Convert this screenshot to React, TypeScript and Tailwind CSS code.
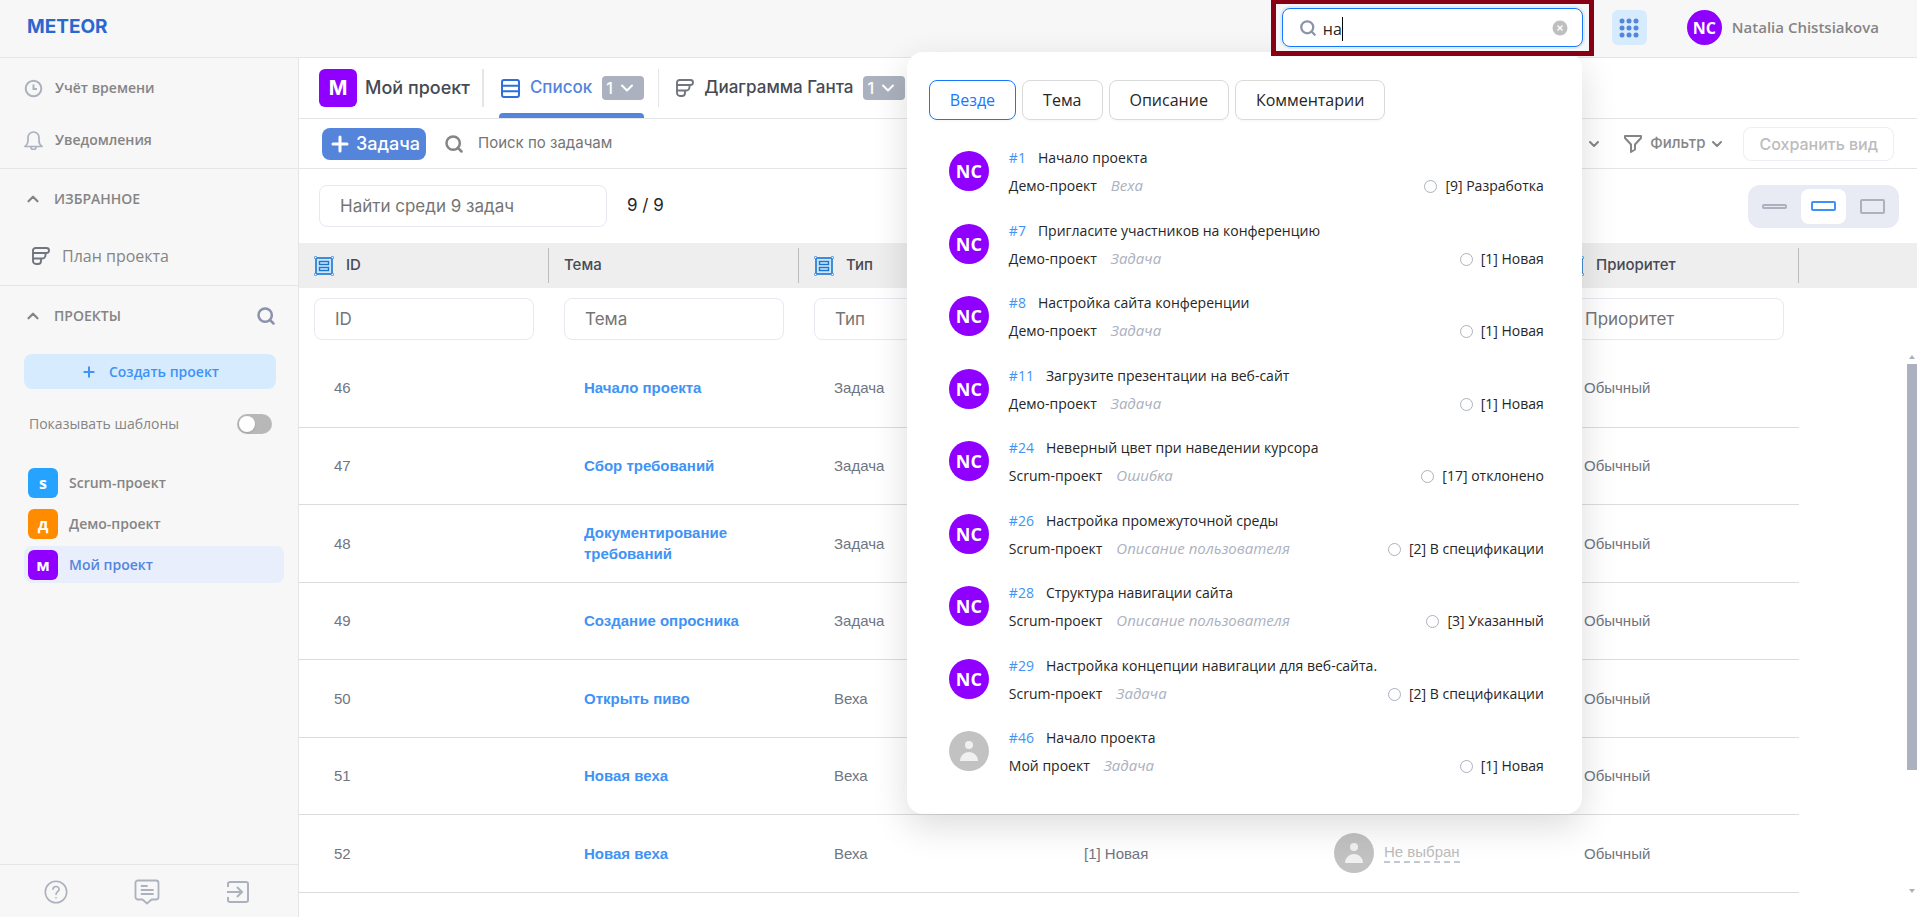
import { useState } from 'react';
import type { ReactNode } from 'react';
import { ChevronDown, ChevronUp, Plus, Search } from 'lucide-react';

interface SearchResult {
  id: number;
  subject: string;
  project: string;
  type: string;
  status: string;
  assigned: boolean;
}

interface WorkPackage {
  id: number;
  subject: string;
  type: string;
  status?: string;
  assignee?: string;
}

const results: SearchResult[] = [
  { id: 1, subject: 'Начало проекта', project: 'Демо-проект', type: 'Веха', status: '[9] Разработка', assigned: true },
  { id: 7, subject: 'Пригласите участников на конференцию', project: 'Демо-проект', type: 'Задача', status: '[1] Новая', assigned: true },
  { id: 8, subject: 'Настройка сайта конференции', project: 'Демо-проект', type: 'Задача', status: '[1] Новая', assigned: true },
  { id: 11, subject: 'Загрузите презентации на веб-сайт', project: 'Демо-проект', type: 'Задача', status: '[1] Новая', assigned: true },
  { id: 24, subject: 'Неверный цвет при наведении курсора', project: 'Scrum-проект', type: 'Ошибка', status: '[17] отклонено', assigned: true },
  { id: 26, subject: 'Настройка промежуточной среды', project: 'Scrum-проект', type: 'Описание пользователя', status: '[2] В спецификации', assigned: true },
  { id: 28, subject: 'Структура навигации сайта', project: 'Scrum-проект', type: 'Описание пользователя', status: '[3] Указанный', assigned: true },
  { id: 29, subject: 'Настройка концепции навигации для веб-сайта.', project: 'Scrum-проект', type: 'Задача', status: '[2] В спецификации', assigned: true },
  { id: 46, subject: 'Начало проекта', project: 'Мой проект', type: 'Задача', status: '[1] Новая', assigned: false },
];

const workPackages: WorkPackage[] = [
  { id: 46, subject: 'Начало проекта', type: 'Задача' },
  { id: 47, subject: 'Сбор требований', type: 'Задача' },
  { id: 48, subject: 'Документирование требований', type: 'Задача' },
  { id: 49, subject: 'Создание опросника', type: 'Задача' },
  { id: 50, subject: 'Открыть пиво', type: 'Веха' },
  { id: 51, subject: 'Новая веха', type: 'Веха' },
  { id: 52, subject: 'Новая веха', type: 'Веха', status: '[1] Новая', assignee: 'Не выбран' },
];

const columns = [
  { key: 'id', title: 'ID', grouped: true },
  { key: 'subject', title: 'Тема', grouped: false },
  { key: 'type', title: 'Тип', grouped: true },
  { key: 'status', title: '', grouped: true },
  { key: 'assignee', title: '', grouped: true },
  { key: 'priority', title: 'Приоритет', grouped: true },
];

const projects = [
  { letter: 's', name: 'Scrum-проект', color: 'bg-[#26a3ff]', active: false },
  { letter: 'д', name: 'Демо-проект', color: 'bg-[#ff8b00]', active: false },
  { letter: 'м', name: 'Мой проект', color: 'bg-[#8f00ff]', active: true },
];

const scopes = ['Везде', 'Тема', 'Описание', 'Комментарии'];

function GanttIcon() {
  return (
    <svg className="size-[18px] text-[#70757f]" viewBox="0 0 18 18" fill="none" stroke="currentColor" strokeWidth="1.900" strokeLinejoin="round">
      <path d="M3.500 1h11a2.500 2.500 0 0 1 0 5H1V3.500A2.500 2.500 0 0 1 3.500 1Z" />
      <path d="M13.500 6v2a3.500 3.500 0 0 1-3.500 3.500H1V6M9 11.500V14a3 3 0 0 1-3 3H4a3 3 0 0 1-3-3v-2.500" />
    </svg>
  );
}

function ListIcon() {
  return (
    <svg className="size-[19px] text-[#2f6fdb]" viewBox="0 0 19 19" fill="none" stroke="currentColor" strokeWidth="2">
      <rect x="1" y="1" width="17" height="17" rx="2" />
      <path d="M1 6.700h17M1 12.300h17" />
    </svg>
  );
}

function GroupIcon() {
  return (
    <svg className="size-5 shrink-0" viewBox="0 0 20 20" fill="none" stroke="#1677d2">
      <rect x="2" y="2" width="16" height="16" fill="#cfe4f8" strokeWidth="1.600" />
      <rect x="5.500" y="5.500" width="9" height="3" strokeWidth="1.400" />
      <rect x="5.500" y="11.500" width="9" height="3" strokeWidth="1.400" />
      <g fill="#fff" strokeWidth="0.800">
        <circle cx="1.600" cy="1.600" r="1.200" />
        <circle cx="18.400" cy="1.600" r="1.200" />
        <circle cx="1.600" cy="18.400" r="1.200" />
        <circle cx="18.400" cy="18.400" r="1.200" />
      </g>
    </svg>
  );
}

function EmptyAvatar() {
  return (
    <svg className="size-10 shrink-0" viewBox="0 0 40 40">
      <circle cx="20" cy="20" r="20" fill="#c2c2c2" />
      <circle cx="20" cy="14" r="4" fill="#f0f0f0" />
      <path d="M11 30c0-5 4-9 9-9s9 4 9 9Z" fill="#f0f0f0" />
    </svg>
  );
}

function CountBadge() {
  return (
    <button className="flex h-6 w-[42px] items-center gap-1 rounded bg-[#abb1be] pl-1 text-base text-white">
      1
      <ChevronDown className="size-5" strokeWidth={2.5} />
    </button>
  );
}

function SidebarLink({ icon, children }: { icon: ReactNode; children: ReactNode }) {
  return (
    <a href="#" className="flex h-[52px] items-center gap-3 pl-6 text-sm font-semibold">
      {icon}
      {children}
    </a>
  );
}

function Header() {
  const [query, setQuery] = useState('на');
  const [scope, setScope] = useState('Везде');

  return (
    <header className="flex h-[58px] shrink-0 items-start justify-between border-b border-[#e5e5e5] bg-[#f7f7f7] pr-[38px] pl-[27px]">
      <a href="#" className="flex h-[54px] items-center font-[Inter,sans-serif] text-[19px] font-bold text-[#2b67d1]">
        METEOR
      </a>
      <div className="flex items-start">
        <div className="relative">
          <div className="absolute top-[52px] right-3 z-10 w-[675px] rounded-2xl bg-white px-[22px] pt-7 pb-[19px] shadow-[0_12px_36px_rgba(0,0,0,0.14)]">
            <div className="flex gap-[6px]">
              {scopes.map((name) => (
                <button
                  key={name}
                  onClick={() => setScope(name)}
                  className={`h-10 rounded-lg border px-5 text-base shadow-[0_2px_0_rgba(0,0,0,0.02)] ${
                    scope === name ? 'border-[#1677ff] text-[#1677ff]' : 'border-[#d9d9d9] text-[#262626]'
                  }`}
                >
                  {name}
                </button>
              ))}
            </div>
            <ul className="mt-[22px] pr-4 pl-5">
              {results.map((item) => (
                <li key={item.id} className="flex h-[73px] gap-5 pt-[9px] text-sm text-[#262626] even:h-[72px]">
                  {item.assigned ? (
                    <span className="flex size-10 shrink-0 items-center justify-center rounded-full bg-[#8f00ff] text-lg font-bold text-white">
                      NC
                    </span>
                  ) : (
                    <EmptyAvatar />
                  )}
                  <div className="-mt-[3px] flex grow flex-col gap-2">
                    <div className="flex h-5 items-center gap-3">
                      <a href="#" className="text-[#3e93f5]">#{item.id}</a>
                      <span>{item.subject}</span>
                    </div>
                    <div className="flex h-5 items-center">
                      <span>{item.project}</span>
                      <span className="pl-[14px] text-[15px] text-[#abb1be] italic">{item.type}</span>
                      <span className="mr-2 ml-auto size-[13px] rounded-full border border-[#abb1be]" />
                      <span>{item.status}</span>
                    </div>
                  </div>
                </li>
              ))}
            </ul>
          </div>
          <div className="relative z-20 h-14 border-[5px] border-t-4 border-[#870014] bg-[#f7f7f7] px-1.5 pt-1">
            <div className="relative flex h-[39px] w-[301px] items-center rounded-lg border border-[#1677ff] bg-white pr-[14px] pl-4 shadow-[0_0_0_2px_rgba(5,145,255,0.1)]">
              <Search className="size-[18px] text-[#8a93ab]" strokeWidth={3} />
              <input
                type="text"
                aria-label="Поиск"
                value={query}
                onChange={(e) => setQuery(e.target.value)}
                className="min-w-0 grow pt-[2px] pl-[6px] text-base text-[#262626] outline-none"
              />
              <span className="absolute top-2 left-[59px] h-6 w-px bg-black" />
              <button aria-label="Очистить" onClick={() => setQuery('')}>
                <svg className="size-4" viewBox="0 0 16 16">
                  <circle cx="8" cy="8" r="7.500" fill="#bfbfbf" />
                  <path d="m5.500 5.500 5 5m0-5-5 5" stroke="#fff" strokeWidth="1.400" />
                </svg>
              </button>
            </div>
          </div>
        </div>
        <button aria-label="Приложения" className="mt-[10px] ml-[18px] flex size-[35px] items-center justify-center rounded-md bg-[#d7ebff]">
          <svg className="size-5" viewBox="0 0 20 20" fill="#5485db">
            {[3, 10, 17].map((y) => [3, 10, 17].map((x) => <circle key={`${x}-${y}`} cx={x} cy={y} r="2.500" />))}
          </svg>
        </button>
        <button className="mt-[10px] ml-10 flex items-center gap-[10px] text-[15px] font-semibold text-[#858585]">
          <span className="flex size-[35px] items-center justify-center rounded-full bg-[#8f00ff] text-base font-bold text-white">NC</span>
          Natalia Chistsiakova
        </button>
      </div>
    </header>
  );
}

function Sidebar() {
  return (
    <aside className="flex w-[299px] shrink-0 flex-col border-r border-[#e5e5e5] bg-[#f7f7f7] text-[#858585]">
      <nav className="border-b border-[#e5e5e5] pt-1 pb-[2px]">
        <SidebarLink
          icon={
            <svg className="size-[19px] text-[#abb1be]" viewBox="0 0 19 19" fill="none" stroke="currentColor" strokeWidth="2">
              <circle cx="9.500" cy="9.500" r="7.800" />
              <path d="M9.500 5.500v4.500H13" />
            </svg>
          }
        >
          Учёт времени
        </SidebarLink>
        <SidebarLink
          icon={
            <svg className="size-[19px] text-[#abb1be]" viewBox="0 0 19 19" fill="none" stroke="currentColor" strokeWidth="1.700">
              <path d="M1 15.500h17c-2-1.600-3-3-3-5.500V7A5.500 5.500 0 0 0 9.500 1 5.500 5.500 0 0 0 4 7v3c0 2.500-1 3.900-3 5.500Z" strokeLinejoin="round" />
              <path d="M7 16a2.500 2.500 0 0 0 5 0" />
            </svg>
          }
        >
          Уведомления
        </SidebarLink>
      </nav>

      <section className="border-b border-[#e5e5e5] pb-[2px]">
        <h2 className="flex h-[60px] items-center gap-3 pl-6 text-sm font-semibold">
          <ChevronUp className="size-[18px]" strokeWidth={3} />
          ИЗБРАННОЕ
        </h2>
        <a href="#" className="flex h-[54px] items-center gap-3 pl-8 text-base">
          <GanttIcon />
          План проекта
        </a>
      </section>

      <section className="pr-[22px] pl-6">
        <div className="-ml-6 flex h-[60px] items-center justify-between pl-6 text-sm font-semibold">
          <h2 className="flex items-center gap-3">
            <ChevronUp className="size-[18px]" strokeWidth={3} />
            ПРОЕКТЫ
          </h2>
          <button aria-label="Найти проект">
            <Search className="size-5 text-[#8a93ab]" strokeWidth={3} />
          </button>
        </div>
        <button className="mt-2 flex h-[35px] w-full items-center justify-center gap-3 rounded-lg bg-[#d7ebff] text-sm font-semibold text-[#3e93f5]">
          <Plus className="size-4" strokeWidth={3} />
          Создать проект
        </button>
        <label className="mt-6 flex h-[22px] items-center justify-between pr-1 pl-[5px] text-sm font-medium">
          Показывать шаблоны
          <input
            type="checkbox"
            role="switch"
            className="h-5 w-[35px] appearance-none rounded-full bg-[#b8b8b8] p-[2px] before:block before:size-4 before:rounded-full before:bg-white before:shadow checked:bg-[#3e93f5] checked:before:ml-[15px]"
          />
        </label>
        <ul className="-mr-2 mt-[29px] flex flex-col gap-1">
          {projects.map((project) => (
            <li key={project.name}>
              <a
                href="#"
                className={`flex h-[37px] items-center gap-[11px] rounded-lg pl-1 text-sm font-semibold ${
                  project.active ? 'bg-[#e8eefb] text-[#5485db]' : ''
                }`}
              >
                <span className={`flex size-[30px] items-center justify-center rounded-md text-base font-bold text-white ${project.color}`}>
                  {project.letter}
                </span>
                {project.name}
              </a>
            </li>
          ))}
        </ul>
      </section>

      <footer className="mt-auto flex h-[53px] items-center justify-between border-t border-[#e5e5e5] pt-[2px] pr-12 pl-11 text-[#abb1be]">
        <button aria-label="Справка">
          <svg className="size-6" viewBox="0 0 24 24" fill="none" stroke="currentColor" strokeWidth="1.600" strokeLinecap="round">
            <circle cx="12" cy="12" r="10.700" />
            <path d="M9 9.200c.2-3.700 6.300-3.600 6.100.2-.1 2.200-2.900 2.400-3.100 5M12 17.800v.2" />
          </svg>
        </button>
        <button aria-label="Сообщения">
          <svg className="size-[26px]" viewBox="0 0 26 26" fill="none" stroke="currentColor" strokeWidth="1.800" strokeLinecap="round" strokeLinejoin="round">
            <path d="M4 1.500h18A2.500 2.500 0 0 1 24.500 4v14a2.500 2.500 0 0 1-2.500 2.500h-4.500L13 24.500l-4.500-4H4A2.500 2.500 0 0 1 1.500 18V4A2.500 2.500 0 0 1 4 1.500Z" />
            <path d="M7.500 7H13M7.500 11h11.500M7.500 15h11.500" />
          </svg>
        </button>
        <button aria-label="Выйти">
          <svg className="size-6" viewBox="0 0 24 24" fill="none" stroke="currentColor" strokeWidth="2">
            <path d="M2 7V4a2 2 0 0 1 2-2h16a2 2 0 0 1 2 2v16a2 2 0 0 1-2 2H4a2 2 0 0 1-2-2v-3M1 12h14m-4-5 5 5-5 5" />
          </svg>
        </button>
      </footer>
    </aside>
  );
}

function Toolbar() {
  return (
    <>
      <div className="flex h-[61px] shrink-0 items-center border-b border-[#e5e5e5] pl-5 font-medium text-[#464a53]">
        <span className="mr-2 flex size-[38px] items-center justify-center rounded-md bg-[#8f00ff] text-xl font-bold text-white">М</span>
        <span className="text-lg">Мой проект</span>
        <span className="mr-[15px] ml-3 h-[38px] w-[2px] bg-[#e5e5e5]" />
        <div className="flex h-[60px] flex-col justify-end">
          <div className="flex grow items-center gap-[10px] pt-[5px] pl-[2px] text-[17px] text-[#5485db]">
            <ListIcon />
            <a href="#">Список</a>
            <CountBadge />
          </div>
          <span className="h-[5px] rounded-t bg-[#5485db]" />
        </div>
        <span className="mr-[17px] ml-[14px] h-[38px] w-px bg-[#e5e5e5]" />
        <div className="flex items-center gap-[10px] text-[17px]">
          <GanttIcon />
          <a href="#">Диаграмма Ганта</a>
          <CountBadge />
        </div>
      </div>

      <div className="flex h-[50px] shrink-0 items-center border-b border-[#e5e5e5] px-[23px] text-[#858585]">
        <button className="flex h-8 items-center gap-1 rounded-lg bg-[#5485db] px-[6px] text-lg font-medium text-white">
          <Plus className="size-6" strokeWidth={3} />
          Задача
        </button>
        <Search className="ml-[18px] size-5" strokeWidth={3} />
        <input type="text" aria-label="Поиск по задачам" placeholder="Поиск по задачам" className="ml-[14px] w-64 text-[15px] outline-none placeholder:text-[#757575]" />
        <div className="ml-auto flex items-center text-[15px] font-medium">
          <button aria-label="Группировка" className="flex items-center gap-1">
            <span className="h-6 w-[42px] rounded bg-[#abb1be]" />
            <ChevronDown className="size-4" strokeWidth={3} />
          </button>
          <button className="ml-[22px] flex items-center gap-2">
            <svg className="size-[18px]" viewBox="0 0 18 18" fill="none" stroke="currentColor" strokeWidth="2" strokeLinejoin="round">
              <path d="M1 1h16v2l-6 6.500v5L7 17V9.500L1 3Z" />
            </svg>
            Фильтр
            <ChevronDown className="-ml-1 size-4" strokeWidth={3} />
          </button>
          <button disabled className="ml-[18px] h-[34px] rounded-lg border border-[#ededf3] px-[15px] text-base text-[#bcbcbc]">
            Сохранить вид
          </button>
        </div>
      </div>
    </>
  );
}

function ViewSwitch() {
  return (
    <div className="ml-auto flex h-[43px] items-center rounded-xl bg-[#e8ebf3] px-1 text-[#abb1be]">
      <button aria-label="Компактный вид" className="flex h-[35px] w-[45px] items-center justify-center">
        <span className="h-[5px] w-[25px] rounded-xs border-2 border-current" />
      </button>
      <button aria-label="Обычный вид" className="mx-1 flex h-[35px] w-[45px] items-center justify-center rounded-lg bg-white text-[#3e93f5]">
        <span className="h-[10px] w-[25px] rounded-xs border-2 border-current" />
      </button>
      <button aria-label="Просторный вид" className="flex h-[35px] w-[45px] items-center justify-center">
        <span className="h-[15px] w-[25px] rounded-xs border-2 border-current" />
      </button>
    </div>
  );
}

function WorkPackageTable() {
  return (
    <table className="w-full table-fixed text-left">
      <colgroup>
        {columns.map((column) => (
          <col key={column.key} className="w-[250px]" />
        ))}
        <col />
      </colgroup>
      <thead>
        <tr className="bg-[#eeeeee] text-[15px] text-[#464a53]">
          {columns.map((column) => (
            <th key={column.key} className="h-[45px] p-0 font-medium">
              <div className="flex h-[35px] items-center gap-3 border-r border-[#bcbcbc] pl-[15px]">
                {column.grouped && <GroupIcon />}
                {column.title}
              </div>
            </th>
          ))}
          <th aria-label="Действия" />
        </tr>
        <tr>
          {columns.map((column) => (
            <td key={column.key} className="h-[61px] px-[15px] py-0">
              <input
                type="text"
                aria-label={column.title || column.key}
                placeholder={column.title}
                className="block h-[42px] w-full rounded-lg border border-[#e7e9f1] px-5 text-[17px] outline-none placeholder:text-[#757575]"
              />
            </td>
          ))}
        </tr>
      </thead>
      <tbody className="font-['Liberation_Sans',sans-serif] text-[15px] leading-[21px] text-[#70757f]">
        {workPackages.map((row) => (
          <tr key={row.id} className="h-[78px] even:h-[77px] [&>td]:border-b [&>td]:border-[#dcdcdc] [&>td]:px-[35px] [&>td]:py-0">
            <td>{row.id}</td>
            <td>
              <a href="#" className="block font-bold text-[#3e93f5]">{row.subject}</a>
            </td>
            <td>{row.type}</td>
            <td>{row.status}</td>
            <td>
              {row.assignee && (
                <div className="flex items-center gap-[10px] whitespace-nowrap text-[#bcbcbc]">
                  <EmptyAvatar />
                  <span className="border-b-2 border-dashed border-[#c3c8d3] leading-[18px]">{row.assignee}</span>
                </div>
              )}
            </td>
            <td>Обычный</td>
          </tr>
        ))}
      </tbody>
    </table>
  );
}

export default function App() {
  return (
    <div className="flex h-screen flex-col overflow-hidden bg-white font-['Open_Sans',sans-serif]">
      <Header />
      <div className="flex min-h-0 grow">
        <Sidebar />
        <main className="flex min-w-0 grow flex-col overflow-hidden font-[Inter,sans-serif]">
          <Toolbar />
          <div className="flex h-[74px] shrink-0 items-center pr-[18px] pl-5 text-[17px] text-[#262626]">
            <input
              type="text"
              aria-label="Найти среди 9 задач"
              placeholder="Найти среди 9 задач"
              className="h-[42px] w-[288px] rounded-lg border border-[#e7e9f1] px-5 outline-none placeholder:text-[#757575]"
            />
            <span className="ml-5">9 / 9</span>
            <ViewSwitch />
          </div>
          <div className="relative min-h-0 grow">
            <WorkPackageTable />
            <div className="absolute top-[112px] right-0 bottom-6 flex w-[10px] flex-col items-center justify-between text-[#abb1be]">
              <svg className="h-1 w-[6px] shrink-0" viewBox="0 0 6 4" fill="currentColor">
                <path d="M3 0 6 4H0Z" />
              </svg>
              <div className="my-[5px] w-full grow">
                <div className="h-[78%] bg-[#abb1be]" />
              </div>
              <svg className="h-1 w-[6px] shrink-0" viewBox="0 0 6 4" fill="currentColor">
                <path d="M0 0h6L3 4Z" />
              </svg>
            </div>
          </div>
        </main>
      </div>
    </div>
  );
}
